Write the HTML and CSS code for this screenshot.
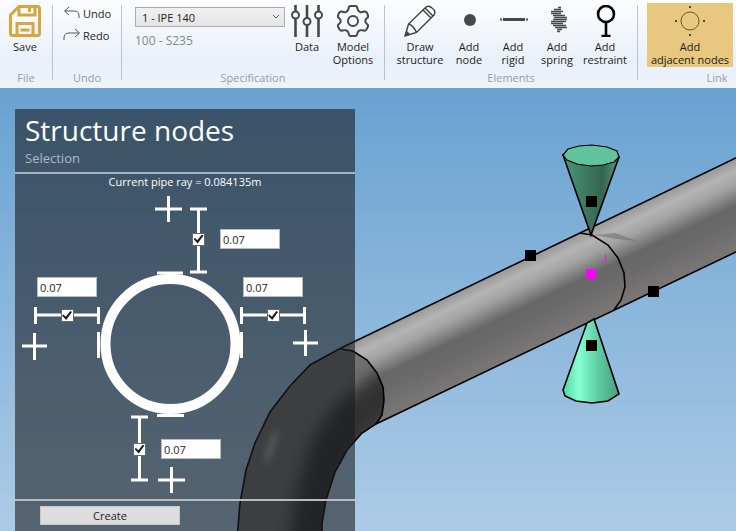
FILE: index.html
```html
<!DOCTYPE html>
<html lang="en">
<head>
<meta charset="utf-8">
<title>Structure nodes</title>
<link rel="stylesheet" href="styles.css">
</head>
<body>
<header class="ribbon">
  <section class="group">
    <div class="tools file-tools">
      <button class="tool">
        <svg class="icon gold" viewBox="0 0 32 32"><path d="M10 1.5H28.5Q30.500 1.500 30.500 3.500V28.500Q30.500 30.500 28.500 30.500H3.500Q1.500 30.500 1.500 28.500V10Z"/><path d="M10 2V10H26V2M20.500 3V7M8 30V18.500H24V30M11.500 25H20.500"/></svg>
        <span>Save</span>
      </button>
    </div>
    <h2>File</h2>
  </section>
  <section class="group">
    <div class="tools history">
      <button class="row-tool"><svg class="small" viewBox="0 0 18 14"><path d="M6 1L1.500 5L6 9M2 5H11Q16 5 16 10V12"/></svg>Undo</button>
      <button class="row-tool"><svg class="small" viewBox="0 0 18 14"><path d="M12 1L16.500 5L12 9M16 5H6Q1 5 1 10V12"/></svg>Redo</button>
    </div>
    <h2>Undo</h2>
  </section>
  <section class="group">
    <div class="tools specification">
      <div class="section-picker">
        <div class="select-wrap">
          <select aria-label="Section"><option>1 - IPE 140</option></select>
          <svg class="chevron" viewBox="0 0 8 6"><path d="M1 1L4 4L7 1"/></svg>
        </div>
        <p>100 - S235</p>
      </div>
      <button class="tool">
        <svg class="icon" viewBox="0 0 32 32"><g stroke-width="2.600"><path d="M4.500 0V6.500M4.500 13.500V32M16 0V13M16 20V32M27.500 0V6.500M27.500 13.500V32"/><g stroke-width="2"><circle cx="4.500" cy="10" r="3.500"/><circle cx="16" cy="16.500" r="3.500"/><circle cx="27.500" cy="10" r="3.500"/></g></g></svg>
        <span>Data</span>
      </button>
      <button class="tool wide">
        <svg class="icon" viewBox="0 0 32 32"><path d="M13.500 1H18.500Q20 1 20.300 3Q20.700 6 23 7Q25 7.500 27 6.500Q29 6 30 8L31 10.500Q31.500 12 30 13Q26.500 16 30 19Q31.500 20 31 21.500L29.500 24.500Q28.500 26 26.500 25.500Q21.500 24 20.300 28.500Q20 31 18.500 31H13.500Q12 31 11.700 28.500Q10.500 24 5.500 25.500Q3.500 26 2.500 24.500L1 21.500Q.5 20 2 19Q5.500 16 2 13Q.5 12 1 10.500L2 8Q3 6 5 6.500Q7 7.500 9 7Q11.300 6 11.700 3Q12 1 13.500 1Z"/><circle cx="16" cy="16" r="5"/></svg>
        <span>Model<br>Options</span>
      </button>
    </div>
    <h2>Specification</h2>
  </section>
  <section class="group">
    <div class="tools elements">
      <button class="tool large draw">
        <svg class="icon thin" viewBox="0 0 32 32"><path d="M1 31L4.500 19L22 2Q25 0 28 3Q32.500 6 30 10L12.500 27.500ZM4.500 19Q9 20 12.500 27.500M19 5L27 13M21 3L29 11"/><path class="solid" d="M1 31L2.500 25.500L6.500 29.500Z"/></svg>
        <span>Draw<br>structure</span>
      </button>
      <button class="tool">
        <svg class="icon" viewBox="0 0 32 32"><circle class="solid" cx="17" cy="15" r="6"/></svg>
        <span>Add<br>node</span>
      </button>
      <button class="tool">
        <svg class="icon" viewBox="0 0 32 32"><path stroke-width="3" d="M6 14.500H28"/><path d="M3 14.500H5M29 14.500H31"/></svg>
        <span>Add<br>rigid</span>
      </button>
      <button class="tool">
        <svg class="icon" viewBox="0 0 32 32"><path stroke-width="1.300" d="M17 2.500H20M13 4.500H20M10 6.500H22M10 8.500H20M12 10.500H24M13 12.500H26M12 14.500H26M10 16.500H25M10 18.500H22M12 20.500H25M14 22.500H26M16 24.500H21M16 26.500H19"/></svg>
        <span>Add<br>spring</span>
      </button>
      <button class="tool large">
        <svg class="icon black" viewBox="0 0 32 32"><circle cx="17" cy="9" r="8"/><path d="M17 17V30M12.500 31H21.500"/></svg>
        <span>Add<br>restraint</span>
      </button>
    </div>
    <h2>Elements</h2>
  </section>
  <section class="group link-group">
    <div class="tools">
      <button class="tool selected">
        <svg class="icon round" viewBox="0 0 32 32"><circle cx="16" cy="16" r="9"/><path class="solid" d="M15 1H17V3H15ZM15 29H17V31H15ZM1 15H3V17H1ZM29 15H31V17H29Z"/></svg>
        <span>Add<br>adjacent nodes</span>
      </button>
    </div>
    <h2>Link</h2>
  </section>
</header>

<main class="viewport">
  <svg class="scene" viewBox="0 89 736 442" preserveAspectRatio="xMinYMin slice" aria-hidden="true">
    <defs>
      <linearGradient id="tube" gradientUnits="userSpaceOnUse" x1="530" y1="257" x2="567" y2="334">
        <stop offset="0" stop-color="#999"/><stop offset=".14" stop-color="#b4b4b4"/><stop offset=".28" stop-color="#a2a2a2"/><stop offset=".5" stop-color="#676767"/><stop offset=".65" stop-color="#6a6a6a"/><stop offset="1" stop-color="#7b7777"/>
      </linearGradient>
      <linearGradient id="cone-top"><stop offset="0" stop-color="#4b9a7b"/><stop offset=".4" stop-color="#3f7860"/><stop offset=".7" stop-color="#356551"/><stop offset="1" stop-color="#4f9a7e"/></linearGradient>
      <linearGradient id="cone-bottom"><stop offset="0" stop-color="#52d3a0"/><stop offset=".28" stop-color="#88ffd4"/><stop offset=".6" stop-color="#5fd0a5"/><stop offset="1" stop-color="#489e80"/></linearGradient>
      <clipPath id="elbow-clip"><path d="M341 349L310 365L290 386L270 412L255 443L246 470L240 503L237 540H322L322 523L326 500L335 472L347 450L362 433L376 424L382 415L384 400L383 387L377 373L367 360L353 351Z"/></clipPath>
      <filter id="soft" x="-50%" y="-50%" width="200%" height="200%"><feGaussianBlur stdDeviation="8"/></filter>
      <filter id="glow" x="-200%" y="-100%" width="500%" height="300%"><feGaussianBlur stdDeviation="3"/></filter>
    </defs>
    <path fill="url(#tube)" stroke="none" d="M341 348L740 156V250L376 424Z"/>
    <path class="edge" d="M341 348L740 156M740 250L376 424"/>
    <path fill="#666" opacity=".5" d="M594 235L615 233L637 241L616 239Z"/>
    <g clip-path="url(#elbow-clip)">
      <path fill="#717171" d="M220 330H400V540H220Z"/>
      <path fill="none" stroke="#323232" stroke-width="46" filter="url(#soft)" d="M312 560Q314 500 333 450Q350 415 400 385"/>
      <ellipse cx="271" cy="447" rx="3" ry="18" fill="#b5b5b5" filter="url(#glow)" transform="rotate(18 271 447)"/>
    </g>
    <path class="edge" d="M341 348L310 365L290 386L270 412L255 443L246 470L240 503L237 540M322 540V523L326 500L335 472L347 450L362 433L376 424L382 415L384 400L383 387L377 373L367 360L353 351L341 349"/>
    <path class="edge" d="M580 233L592 235L608 245L618 258L624 273L625 287L621 300L614 310"/>
    <path class="edge" fill="url(#cone-top)" d="M563 155L591 235L619 157Z"/>
    <path class="edge thin-edge" fill="#62c39f" d="M563 155L568 149L579 146L592 145L607 147L617 151L619 157L614 162L603 165L591 166L577 164L567 160Z"/>
    <path class="edge" fill="url(#cone-bottom)" d="M587 323L563 390L565 396L576 401L592 403L608 401L619 394L594 319Z"/>
    <path d="M586 196H597V207H586ZM525 250H536V261H525ZM648 286H659V297H648ZM586 340H597V351H586Z"/>
    <path fill="#f0f" d="M586 269H596V279H586Z"/>
    <path fill="none" stroke="#e020e0" d="M605.500 254V262"/>
  </svg>

  <aside class="panel">
    <div class="panel-head">
      <h1>Structure nodes</h1>
      <p>Selection</p>
    </div>
    <p class="ray">Current pipe ray = 0.084135m</p>
    <div class="diagram">
      <svg viewBox="15 192 340 307" aria-hidden="true">
        <circle cx="170.500" cy="344" r="65" stroke-width="10"/>
        <path d="M157 273H183M157 415.500H184M98.500 332V358M241.500 332V358"/>
        <path d="M155 209H182M168.500 196V222M22 346H47M34.500 333V360M293 343H318M305.500 330V356M158 480H185M171.500 467V493"/>
        <path d="M190 209H207M190 272H207M198.500 209V272M131 417H148M131 480H148M139.500 417V480M35.500 307V324M98.500 307V324M35.500 315H98.500M241.500 307V324M304.500 307V324M241.500 315H304.500"/>
      </svg>
      <div class="offset top"><input type="checkbox" checked aria-label="Use top node"><input type="text" value="0.07" aria-label="Top distance"></div>
      <div class="offset stacked left"><input type="text" value="0.07" aria-label="Left distance"><input type="checkbox" checked aria-label="Use left node"></div>
      <div class="offset stacked right"><input type="text" value="0.07" aria-label="Right distance"><input type="checkbox" checked aria-label="Use right node"></div>
      <div class="offset bottom"><input type="checkbox" checked aria-label="Use bottom node"><input type="text" value="0.07" aria-label="Bottom distance"></div>
    </div>
    <div class="panel-foot"><button class="create">Create</button></div>
  </aside>
</main>
</body>
</html>
```

FILE: styles.css
```css
* { box-sizing: border-box; }

body {
  margin: 0;
  min-height: 100vh;
  display: flex;
  flex-direction: column;
  overflow: hidden;
  font: 11px/13px "Open Sans", "Noto Sans", sans-serif;
  color: #1c1c1c;
}

h1, h2, p { margin: 0; font-weight: 400; }
button, input, select { font: inherit; color: inherit; }

.ribbon {
  flex: none;
  display: flex;
  padding-top: 3px;
  overflow: hidden;
  background: linear-gradient(#fbfdff, #e9f0f9 70%, #edf3fb);
  border-bottom: 1px solid #7d9cb8;
}
.group {
  flex: none;
  display: flex;
  flex-direction: column;
  position: relative;
  height: 85px;
}
.group:not(:last-child) {
  border-right: 1px solid transparent;
  border-image: linear-gradient(transparent 3%, #bcc3cb 3%, #bcc3cb 90%, transparent 90%) 1;
}
.group h2 {
  font-size: 11px;
  line-height: 14px;
  text-align: center;
  color: #979ca3;
  padding-bottom: 3px;
}
.tools { flex: 1; display: flex; align-items: flex-start; }
.file-tools { padding: 0 5px 0 3px; }
.history { flex-direction: column; gap: 2px; width: 68px; padding-left: 10px; }
.specification { padding: 0 7px 0 13px; }
.elements { padding: 0 6px 0 8px; }
.link-group { width: 158px; }
.link-group .tools { padding-left: 9px; }

.tool {
  width: 44px;
  height: 64px;
  padding: 2px 0 0;
  border: 0;
  background: none;
  display: flex;
  flex-direction: column;
  align-items: center;
  gap: 3px;
  white-space: nowrap;
}
.tool.wide { width: 48px; }
.tool.large { width: 52px; }
.tool.draw { width: 54px; }
.tool.selected { width: 86px; background: #e8c77e; }

.icon {
  flex: none;
  width: 32px;
  height: 32px;
  fill: none;
  stroke: #484848;
  stroke-width: 2;
}
.icon.gold { stroke: #d9a63c; stroke-width: 3; }
.icon.thin { stroke-width: 1.4; stroke: #3c3c3c; }
.icon.black { stroke: #000; stroke-width: 2.6; }
.icon.round { stroke: #6b5526; stroke-width: 1; }
.icon .solid { fill: #484848; stroke: none; }

.row-tool {
  display: flex;
  align-items: center;
  gap: 2px;
  height: 20px;
  padding: 0;
  border: 0;
  background: none;
  white-space: nowrap;
}
.small { width: 18px; height: 14px; fill: none; stroke: #555; }

.section-picker { width: 150px; padding-top: 4px; }
.section-picker p { padding-top: 7px; font-size: 12px; color: #83888e; }
.select-wrap { position: relative; }
.select-wrap select {
  display: block;
  width: 100%;
  height: 20px;
  padding: 0 6px;
  appearance: none;
  border: 1px solid #acacac;
  border-radius: 0;
  background: linear-gradient(#f0f0f0, #e5e5e5);
}
.chevron {
  position: absolute;
  right: 5px;
  top: 7px;
  width: 8px;
  height: 6px;
  fill: none;
  stroke: #606060;
  pointer-events: none;
}

.viewport {
  flex: 1;
  position: relative;
  display: flex;
  padding: 20px 15px 0;
  background: linear-gradient(#68a2d1, #adcbe6);
}
.scene { position: absolute; inset: 0; width: 100%; height: 100%; }
.edge { fill: none; stroke: #000; stroke-width: 1.6; }
.edge[fill] { fill: revert-layer; }
.thin-edge { stroke-width: 1.2; }

.panel {
  position: relative;
  width: 340px;
  background: rgba(26, 27, 30, .59);
  color: #fff;
}
.panel-head {
  padding: 2px 10px 6px;
  border-bottom: 2px solid #a3b3c1;
}
.panel-head h1 { font-size: 28px; line-height: 38px; }
.panel-head p { padding-top: 1px; font-size: 13px; line-height: 16px; color: #b0b9c1; }
.ray { text-align: center; line-height: 16px; padding-bottom: 2px; }

.diagram { position: relative; }
.diagram svg { display: block; width: 100%; fill: none; stroke: #fff; stroke-width: 3; }
.offset { position: absolute; display: flex; align-items: center; gap: 15px; }
.offset.stacked { flex-direction: column; gap: 12px; }
.offset.top { left: 177px; top: 37px; }
.offset.left { left: 22px; top: 85px; }
.offset.right { left: 228px; top: 85px; }
.offset.bottom { left: 118px; top: 247px; }

input[type="text"] {
  width: 60px;
  height: 20px;
  padding: 0 2px;
  border: 1px solid #b5bcc3;
  background: #fff;
  color: #1c1c1c;
}
input[type="checkbox"] {
  appearance: none;
  width: 13px;
  height: 13px;
  margin: 0;
  border: 1px solid #606a73;
  background: #fff;
  display: grid;
  place-items: center;
}
input[type="checkbox"]:checked::before {
  content: "";
  width: 10px;
  height: 9px;
  background: #1c1c1c;
  clip-path: polygon(0 50%, 15% 38%, 38% 65%, 84% 0, 100% 10%, 42% 100%);
}

.panel-foot { border-top: 2px solid #b5bcc3; padding: 5px 25px 6px; }
.create {
  display: block;
  width: 140px;
  height: 19px;
  padding: 0;
  border: 1px solid #c6c8ca;
  background: #ddd;
  color: #1c1c1c;
}
```
